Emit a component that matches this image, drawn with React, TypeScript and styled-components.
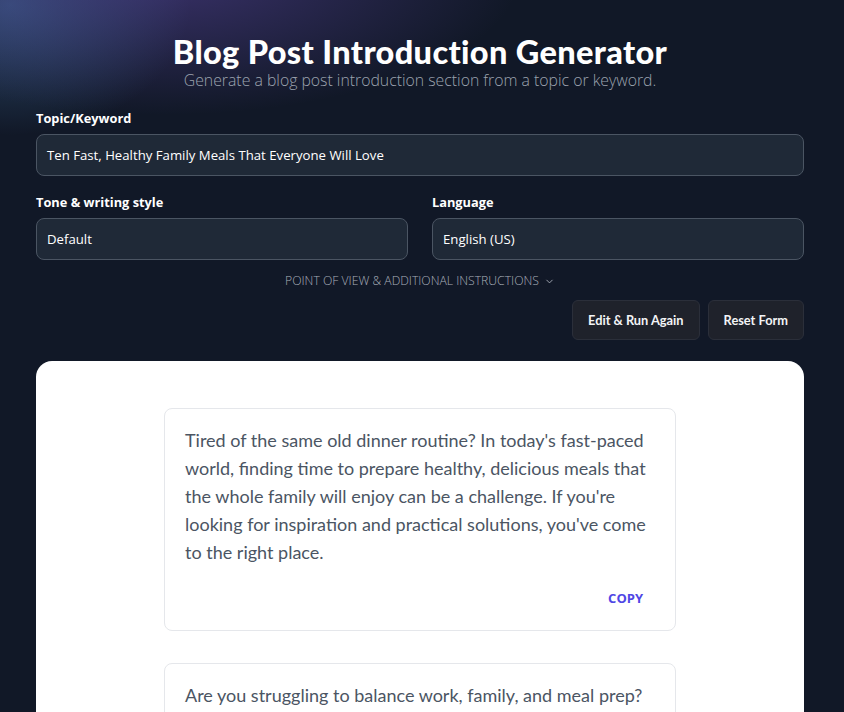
import React from "react";
import styled, { createGlobalStyle } from "styled-components";

const GlobalStyle = createGlobalStyle`
  * { box-sizing: border-box; }
  html, body {
    margin: 0;
    padding: 0;
    background: #111827;
    font-family: "Open Sans", "Noto Sans", sans-serif;
    color: #ffffff;
  }
`;

const Page = styled.div`
  position: relative;
  height: 712px;
  overflow: hidden;
  background:
    radial-gradient(ellipse 360px 140px at 160px -25px, rgba(84, 66, 150, 0.6), rgba(84, 66, 150, 0) 100%),
    radial-gradient(ellipse 180px 130px at 10px 5px, rgba(60, 105, 150, 0.65), rgba(60, 105, 150, 0) 100%),
    #111827;
`;

const Container = styled.div`
  display: flex;
  flex-direction: column;
  padding: 34px 40px 0 36px;
`;

const Header = styled.header`
  display: flex;
  flex-direction: column;
  align-items: center;
  margin-bottom: 20px;
`;

const Title = styled.h1`
  margin: 0;
  font-family: "Lato", "Open Sans", sans-serif;
  font-weight: 900;
  font-size: 32.5px;
  line-height: 36px;
  letter-spacing: 0.35px;
  color: #ffffff;
`;

const Subtitle = styled.p`
  margin: 0;
  font-weight: 300;
  font-size: 15.8px;
  line-height: 20px;
  color: #9ca3af;
`;

const Field = styled.label`
  display: flex;
  flex-direction: column;
  gap: 8px;
`;

const Label = styled.span`
  font-size: 12.8px;
  font-weight: 700;
  line-height: 16px;
  color: #ffffff;
`;

const Input = styled.div`
  height: 42px;
  display: flex;
  align-items: center;
  padding: 0 10px;
  background: #1f2937;
  border: 1px solid #4b5563;
  border-radius: 8px;
  font-size: 13.2px;
  color: #ffffff;
`;

const Row = styled.div`
  display: grid;
  grid-template-columns: 1fr 1fr;
  gap: 24px;
  margin-top: 18px;
`;

const Toggle = styled.button`
  align-self: center;
  margin-top: 13px;
  display: flex;
  align-items: center;
  gap: 5px;
  border: none;
  background: none;
  padding: 0;
  font-family: inherit;
  font-size: 12.2px;
  font-weight: 300;
  line-height: 16px;
  color: #a7adb8;
  text-transform: uppercase;
`;

const Actions = styled.div`
  display: flex;
  justify-content: flex-end;
  gap: 8px;
  margin-top: 11px;
`;

const ActionButton = styled.button`
  height: 40px;
  padding: 0 15px;
  background: #1f222b;
  border: 1px solid #2b2f3a;
  border-radius: 6px;
  font-family: "Lato", sans-serif;
  font-size: 12.8px;
  font-weight: 700;
  color: #f3f4f6;
`;

const Results = styled.section`
  margin-top: 21px;
  background: #ffffff;
  border-radius: 16px 16px 0 0;
  padding: 47px 0 0;
  display: flex;
  flex-direction: column;
  align-items: center;
  gap: 32px;
  flex: 1;
  min-height: 400px;
`;

const Card = styled.article`
  width: 512px;
  border: 1px solid #e5e7eb;
  border-radius: 8px;
  padding: 17px 20px 16px;
  display: flex;
  flex-direction: column;
`;

const CardText = styled.p`
  margin: 0;
  font-family: "Lato", "Open Sans", sans-serif;
  font-size: 18px;
  line-height: 28px;
  color: #4b5563;
`;

const CardFooter = styled.div`
  display: flex;
  justify-content: flex-end;
  margin-top: 16px;
`;

const CopyButton = styled.button`
  height: 32px;
  padding: 0 12px;
  border: none;
  background: none;
  font-family: "Open Sans", sans-serif;
  font-size: 13px;
  font-weight: 700;
  color: #4f46e5;
  text-transform: uppercase;
`;

const Chevron = () => (
  <svg width="11" height="11" viewBox="0 0 24 24" fill="none" stroke="currentColor" strokeWidth="2" strokeLinecap="round" strokeLinejoin="round">
    <path d="M6 9l6 6 6-6" />
  </svg>
);

const intros = [
  "Tired of the same old dinner routine? In today's fast-paced world, finding time to prepare healthy, delicious meals that the whole family will enjoy can be a challenge. If you're looking for inspiration and practical solutions, you've come to the right place.",
  "Are you struggling to balance work, family, and meal prep? Getting a nutritious dinner on the table every night doesn't have to be stressful. With a little planning and the right recipes, you can serve meals everyone will love.",
];

export default function App() {
  return (
    <>
      <GlobalStyle />
      <Page>
        <Container>
          <Header>
            <Title>Blog Post Introduction Generator</Title>
            <Subtitle>Generate a blog post introduction section from a topic or keyword.</Subtitle>
          </Header>

          <Field>
            <Label>Topic/Keyword</Label>
            <Input>Ten Fast, Healthy Family Meals That Everyone Will Love</Input>
          </Field>

          <Row>
            <Field>
              <Label>Tone &amp; writing style</Label>
              <Input>Default</Input>
            </Field>
            <Field>
              <Label>Language</Label>
              <Input>English (US)</Input>
            </Field>
          </Row>

          <Toggle>
            Point of view &amp; additional instructions <Chevron />
          </Toggle>

          <Actions>
            <ActionButton>Edit &amp; Run Again</ActionButton>
            <ActionButton>Reset Form</ActionButton>
          </Actions>

          <Results>
            {intros.map((text, i) => (
              <Card key={i}>
                <CardText>{text}</CardText>
                <CardFooter>
                  <CopyButton>Copy</CopyButton>
                </CardFooter>
              </Card>
            ))}
          </Results>
        </Container>
      </Page>
    </>
  );
}
